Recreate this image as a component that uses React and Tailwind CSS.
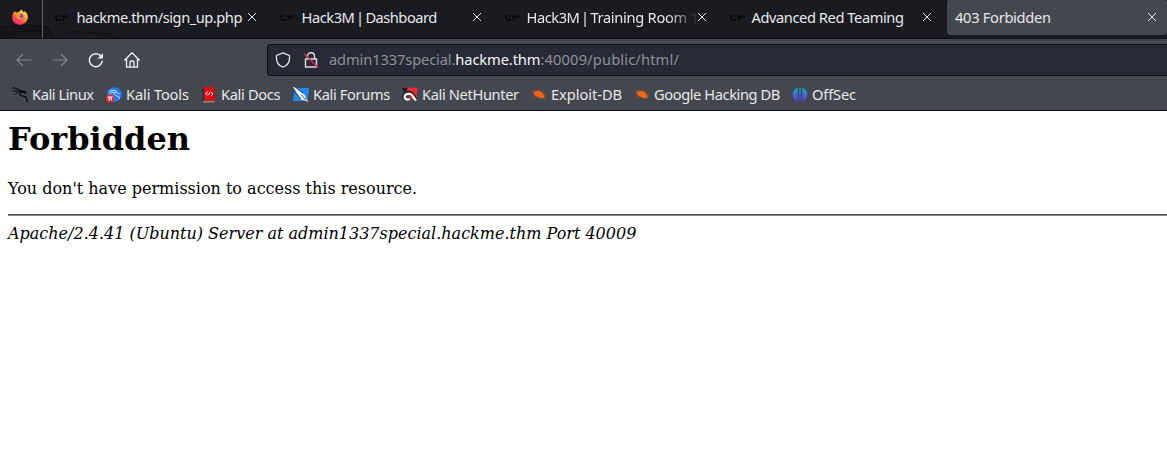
const CloseIcon = () => (
  <svg className="h-[10px] w-[10px] shrink-0" viewBox="0 0 10 10" stroke="#e6e6e8" strokeWidth="1" fill="none"><path d="M1 1l8 8M9 1L1 9" /></svg>
);

const SiteIcon = () => (
  <svg className="h-4 w-4 shrink-0" viewBox="0 0 16 16" fill="#08080b">
    <path d="M0 5h2v4h4v2H1V9H0zM3.500 5h2v2h-2zM7 5.500h8v1.700h-4V9H8V7.200H7zM7 9.500h2v1.300H7z" />
  </svg>
);

const Firefox = () => (
  <svg className="h-4 w-4" viewBox="0 0 16 16">
    <defs>
      <linearGradient id="fire" x1=".85" y1="0" x2=".25" y2="1">
        <stop offset="0" stopColor="#fff44f" /><stop offset=".35" stopColor="#ffb52b" /><stop offset=".65" stopColor="#ff563d" /><stop offset="1" stopColor="#e5167d" />
      </linearGradient>
    </defs>
    <path fill="url(#fire)" d="M1.600 3.400L3 2.200l.8 1.200 1.400.1 2.700-1.300L9.500.2c.4 1.500 1.600 2.300 2.600 3l.2-1.100c2.400 1.300 3.500 3.600 3.500 6 0 4.500-3.400 7.700-7.800 7.700S.2 12.500.2 8.400c0-2 .5-3.500 1.400-5z" />
    <circle cx="8.300" cy="7.600" r="3.100" fill="#7541e5" />
    <path fill="#ff9626" d="M3.600 4.400c1.200-.5 2.800-.2 3.600.7l2 .3c-.3 1-1.400 1.200-1.800 1.700-.3.500.2 1.400 1.600 1.600 1.100.2 1.500-.5 2.200-.2-.7 1.900-2.500 2.500-4 2C5 9.800 4 7.300 3.600 4.400z" />
  </svg>
);

const Dragon = () => (
  <svg className="h-4 w-4" viewBox="0 0 16 16" fill="none" stroke="#08090b" strokeLinecap="round" strokeLinejoin="round">
    <path strokeWidth="1" d="M.4.8c3.200.2 6 1 9 2.900M1.200 4.200c2.500-.8 5.200-.7 8-.1M3 7.400c1.300-1.700 3.400-2.600 6.400-2.700" />
    <path strokeWidth="1.200" d="M9.200 3.800l3.600.7 1.400 1.400-2.200-.1-1.500-.8c-1.800.1-3 1-2.900 2.300.2 1.700 3 1.600 4.900 2 2 .5 2.600 2.400 2.600 5.500" />
    <path strokeWidth="1" d="M11.500 9.500c1.700 0 2.700.5 3.500 1.500" />
  </svg>
);

const Tools = () => (
  <svg className="h-4 w-4" viewBox="0 0 16 16" fill="none">
    <circle cx="8.500" cy="7.500" r="7.300" fill="#247bf4" />
    <path d="M3 4.500c3-1.500 5.500-1.300 7.500 0M3.500 7c2-1.800 4.500-2.200 7-1.400l3 1.200M9 5.800c-1.500 2 .2 2.900 2 3.100 2 .3 2.500 1.500 2.600 3" stroke="#d9eafc" strokeWidth=".9" />
    <circle cx="4.100" cy="11.500" r="4.100" fill="#e72e2d" />
    <path d="M1.800 10h4.800M3.200 10v3.500M5.300 10v3.500" stroke="#fff" strokeWidth="1.100" />
  </svg>
);

const Docs = () => (
  <svg className="h-4 w-4" viewBox="0 0 16 16" fill="none">
    <path d="M1.500.5h2V15h-2z" fill="#17305d" /><path d="M3 0h10.500v14H3z" fill="#e6080c" /><path d="M2 14h11.500v1.500H2z" fill="#90888d" />
    <path d="M6.800 4.800L4.700 6.500l2 1.700M9.800 5l2.200 1.900-2.200 2M7.500 8l1.500-2.800" stroke="#fff" strokeWidth="1" />
  </svg>
);

const Forums = () => (
  <svg className="h-4 w-4" viewBox="0 0 16 16">
    <path d="M2 1h14l-1.500 13H0z" fill="#2487f7" />
    <path d="M0 0l3 .5 9 8 1.500 4 2 2.500-3.500-1.500-4-1L4.500 7z" fill="#f4f6f7" />
    <path d="M0 2l4 5.500 4 4.500M2 0l4 3 4 3M8 7.500l5 5.500" stroke="#20262e" strokeWidth=".8" fill="none" />
  </svg>
);

const NetHunter = () => (
  <svg className="h-4 w-4" viewBox="0 0 16 16" fill="none">
    <path d="M2 .8h13.600L14 14l-6-3z" fill="#ed2937" />
    <path d="M.4 1.600l5 .4M.8 3.600l4-.6" stroke="#101115" strokeWidth="1.300" />
    <path d="M7.500 11.800c-2.500 1-5 .3-5.500-1.700C1.500 7 5 4.500 8.700 5.800c2.400 1 2.800 3.500 5.600 7.200" stroke="#17181c" strokeWidth="3.200" />
    <path d="M7.800 12c-2.300 1.200-5 .3-5.200-1.800C2.400 7.600 6 5.800 8.700 7c2 1 2.300 3 5.300 6.500" stroke="#f7f7f7" strokeWidth="2.400" />
  </svg>
);

const Bug = () => (
  <svg className="h-4 w-4" viewBox="0 0 16 16" fill="#ee6513">
    <path d="M1 3.800l3.400 1 1.600-1L8 4.200l2 .3 1.700 1.800 1.400 1.800.4 2.200-1.300.8-2.500-.1-3-.9-2-1.400L2.300 7.200l1-.9z" />
    <path d="M5 4.500L4.600 3M8 4.500l.8-1.700M11 5.800l1.600-1.600M12 7.800l2.800-.3M4.500 8.500L2.400 10M6 9.600l-1.200 1.800M9 10.500v1.800M12 10.500l2.500 1.600" stroke="#d65d17" strokeWidth=".7" />
  </svg>
);

const OffSec = () => (
  <svg className="h-4 w-4" viewBox="0 0 16 16">
    <defs><linearGradient id="off" x1="0" y1="0" x2="0" y2="1"><stop stopColor="#13abc4" /><stop offset="1" stopColor="#642ce0" /></linearGradient></defs>
    <path fill="url(#off)" d="M5.800 1v13.200C2.700 13.500.6 11 .6 7.600S2.700 1.700 5.800 1zM10.200 1c3.100.7 5.200 3.200 5.200 6.600s-2.100 5.900-5.200 6.600zM7.300.4h1.400v15.200H7.300z" />
  </svg>
);

const Tab = ({ site, title, spacing }) => (
  <div className="flex h-[35px] w-[225px] shrink-0 items-center pl-2">
    <SiteIcon />
    <div className={`ml-[5.500px] w-[170px] shrink-0 pb-px whitespace-pre ${spacing}`}>
      {site && <span className="tracking-[-.45px] [word-spacing:-1.7px]">{site}</span>}{title}
    </div>
    <div className="mb-px ml-[.5px] flex shrink-0"><CloseIcon /></div>
  </div>
);

const Bookmark = ({ icon, label, width }) => (
  <div className={`flex shrink-0 items-center gap-1 whitespace-nowrap ${width}`}>{icon}<span className="mb-[2px]">{label}</span></div>
);

export default function App() {
  return (
    <div className="h-[466px] w-[1167px] overflow-hidden bg-white font-['Noto_Sans',sans-serif] text-[14.667px] leading-5 text-[#e8e8ea]">
      <header className="h-[111px] border-b border-[#0d0e13] bg-[#45474f]">
        <div className="relative flex h-[39px] border-b border-[#101116] bg-[#1a1b20]">
          <svg className="absolute top-0 left-0 h-[38px] w-[140px]" viewBox="0 0 140 38" fill="none">
            <path d="M0 27q22-3 46-1l9 12H0z" fill="#15161a" />
            <path d="M0 28q23-5 47-1l7 11M0 34q18-4 43-3M70 32q24-1 50 6" stroke="#0e0f13" strokeWidth="1.300" />
          </svg>
          <div className="relative flex w-[43px] shrink-0 border-r border-[#64656a] pt-[9px] pl-3"><Firefox /></div>
          <div className="relative ml-1 flex">
            <Tab title="hackme.thm/sign_up.php" spacing="tracking-[-.48px]" />
            <Tab site="Hack3M | " title="Dashboard" spacing="tracking-[-.5px]" />
            <Tab site="Hack3M | " title="Training Room 1" spacing="tracking-[-.3px] [mask-image:linear-gradient(to_right,black_140px,transparent_172px)]" />
            <Tab title="Advanced Red Teaming" spacing="tracking-[-.43px]" />
            <div className="flex h-[35px] w-[220px] items-center justify-between rounded-[4px] rounded-t-[2px] bg-[#45474f] pr-[10px] pb-px pl-2"><span className="tracking-[-.3px]">403 Forbidden</span><CloseIcon /></div>
          </div>
        </div>
        <nav className="flex h-[41px] items-center">
          <div className="flex w-[267px] shrink-0 items-center gap-5 pl-4">
            <svg className="h-4 w-4" viewBox="0 0 16 16" fill="none" stroke="#85868b" strokeWidth="1.200" strokeLinecap="round" strokeLinejoin="round"><path d="M6.500 2.500L1 8l5.500 5.500M1 8h14" /></svg>
            <svg className="h-4 w-4" viewBox="0 0 16 16" fill="none" stroke="#85868b" strokeWidth="1.200" strokeLinecap="round" strokeLinejoin="round"><path d="M9.500 2.500L15 8l-5.500 5.500M15 8H1" /></svg>
            <svg className="h-4 w-4" viewBox="0 0 16 16" fill="none" stroke="#f2f2f3" strokeWidth="1.400" strokeLinecap="round"><path d="M14.300 9.200A6.500 6.500 0 1 1 13 4.200" /><path d="M15 1v5.500H9.500z" fill="#f2f2f3" stroke="none" /></svg>
            <svg className="-ml-[.5px] h-4 w-4" viewBox="0 0 16 16" fill="none" stroke="#f2f2f3" strokeWidth="1.300" strokeLinejoin="round" strokeLinecap="round"><path d="M.8 8L8 .8 15.200 8M2.500 6.800v8.400h11V6.800M6 15v-4.200Q6 9 8 9t2 1.800V15" /></svg>
          </div>
          <div className="flex h-8 grow items-center rounded-l-[4px] border border-r-0 border-[#0c0d13] bg-[#272935] pl-[7px]">
            <svg className="h-4 w-4" viewBox="0 0 16 16" fill="none" stroke="#e8e8ec" strokeWidth="1.300" strokeLinejoin="round"><path d="M8 .8l6.500 2.700c.5 5.300-1.500 10-6.500 11.700C3 13.500 1 8.800 1.500 3.500z" /></svg>
            <svg className="ml-3 h-4 w-4" viewBox="0 0 16 16" fill="none" stroke="#dedee4" strokeWidth="1.400"><path d="M4.500 7V4.300C4.500 2 6 .8 8 .8s3.500 1.200 3.500 3.500V7M2.500 7h11v8h-11z" /><path d="M1.200 1.700l13.600 13.600" stroke="#e22850" strokeWidth="1.500" /></svg>
            <span className="mb-[2px] ml-[10px] whitespace-nowrap text-[#8f9097]"><span className="tracking-[-.12px]">admin1337special.</span><span className="tracking-[-.1px] text-[#f8f8fa]">hackme.thm</span><span className="tracking-[.15px]">:40009/public/html/</span></span>
          </div>
        </nav>
        <div className="flex h-[30px] items-center pl-3">
          <Bookmark icon={<Dragon />} label="Kali Linux" width="w-[94px] tracking-[-.44px]" />
          <Bookmark icon={<Tools />} label="Kali Tools" width="w-[95px] tracking-[-.15px]" />
          <Bookmark icon={<Docs />} label="Kali Docs" width="w-[92px] tracking-[-.35px]" />
          <Bookmark icon={<Forums />} label="Kali Forums" width="w-[109px] tracking-[-.36px]" />
          <Bookmark icon={<NetHunter />} label="Kali NetHunter" width="w-[129px] tracking-[-.37px]" />
          <Bookmark icon={<Bug />} label="Exploit-DB" width="w-[103px] tracking-[-.05px]" />
          <Bookmark icon={<Bug />} label="Google Hacking DB" width="w-[158px] tracking-[-.42px]" />
          <Bookmark icon={<OffSec />} label="OffSec" width="w-[70px] tracking-[-.15px]" />
        </div>
      </header>
      <main className="pl-2 font-['DejaVu_Serif',serif] text-base text-black">
        <h1 className="pt-[9px] text-[32px] leading-[38px] font-bold">Forbidden</h1>
        <p className="mt-[21px] leading-[19px]">You don't have permission to access this resource.</p>
        <hr className="mt-4 h-[2px] border-t border-b border-t-[#4a4a4a] border-b-[#8b8b8b]" />
        <address className="mt-2 leading-[19px] italic">Apache/2.4.41 (Ubuntu) Server at admin1337special.hackme.thm Port 40009</address>
      </main>
    </div>
  );
}
